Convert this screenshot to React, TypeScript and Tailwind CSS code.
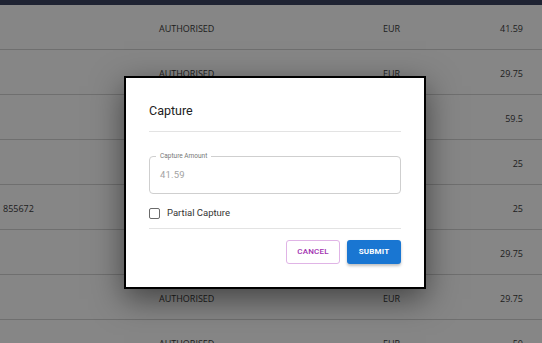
import React from "react";

const ROWS = [
  { id: "", status: "AUTHORISED", currency: "EUR", amount: "41.59" },
  { id: "", status: "AUTHORISED", currency: "EUR", amount: "29.75" },
  { id: "", status: "AUTHORISED", currency: "EUR", amount: "59.5" },
  { id: "", status: "AUTHORISED", currency: "EUR", amount: "25" },
  { id: "855672", status: "AUTHORISED", currency: "EUR", amount: "25" },
  { id: "", status: "AUTHORISED", currency: "EUR", amount: "29.75" },
  { id: "", status: "AUTHORISED", currency: "EUR", amount: "29.75" },
  { id: "", status: "AUTHORISED", currency: "EUR", amount: "50" },
];

export default function App() {
  return (
    <div className="relative w-[542px] h-[343px] overflow-hidden bg-[#868686] font-['Open_Sans',sans-serif]">
      {/* Top bar */}
      <div className="h-[5px] bg-[#1f2333]" />

      {/* Table rows (dimmed by backdrop) */}
      <div className="flex flex-col">
        {ROWS.map((row, i) => (
          <div
            key={i}
            className="h-[45px] shrink-0 border-b border-[#6f6f6f] flex items-center pt-[3px] text-[9px] text-[#1c1c1c]"
          >
            <div className="w-[159px] pl-[3px]">{row.id}</div>
            <div className="w-[224px]">{row.status}</div>
            <div className="w-[100px]">{row.currency}</div>
            <div className="w-[40px] text-right">{row.amount}</div>
          </div>
        ))}
      </div>

      {/* Dialog */}
      <div className="absolute left-[124px] top-[76px] w-[302px] h-[213px] bg-white border-2 border-black shadow-[0_10px_30px_rgba(0,0,0,0.5)] font-['Roboto',sans-serif] px-[23px]">
        <div className="pt-[23px] h-[54px] border-b border-[#e3e3e3]">
          <h2 className="text-[12.5px] leading-[20px] text-[#222]">Capture</h2>
        </div>

        <div className="relative mt-[24px] h-[38px] rounded-[4px] border border-[#cfcfcf] flex items-center px-[10px]">
          <span className="absolute -top-[6px] left-[6px] bg-white px-[4px] text-[6.5px] leading-[10px] text-[#777]">
            Capture Amount
          </span>
          <span className="text-[9.5px] text-[#a3a3a3] tracking-[0.2px]">41.59</span>
        </div>

        <div className="h-[35px] border-b border-[#e3e3e3] flex items-center pt-[4px] gap-[7px]">
          <span className="w-[11px] h-[11px] border-[1.5px] border-[#6a6a6a] rounded-[2px]" />
          <span className="text-[9.5px] text-[#333]">Partial Capture</span>
        </div>

        <div className="flex justify-end gap-[7px] mt-[11px]">
          <button className="w-[54px] h-[24px] rounded-[3px] border border-[#e0b4e6] text-[8px] font-medium text-[#a12fb0] tracking-[0.2px]">
            CANCEL
          </button>
          <button className="w-[54px] h-[24px] rounded-[3px] bg-[#1976d2] text-[8px] font-bold text-white tracking-[0.2px] shadow-[0_2px_3px_rgba(0,0,0,0.25)]">
            SUBMIT
          </button>
        </div>
      </div>
    </div>
  );
}
